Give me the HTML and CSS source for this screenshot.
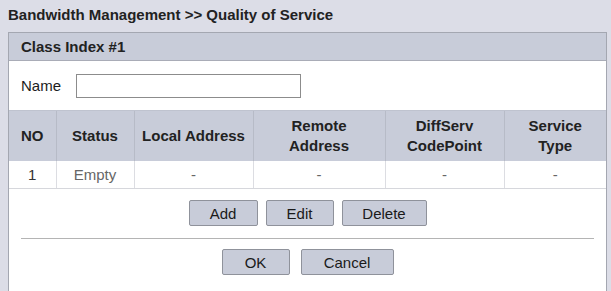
FILE: index.html
```html
<!DOCTYPE html>
<html lang="en">
<head>
    <meta charset="UTF-8">
    <title>Quality of Service</title>
    <link rel="stylesheet" href="styles.css">
</head>
<body>

<h1 class="page-title">Bandwidth Management &gt;&gt; Quality of Service</h1>

<div class="panel">
    <div class="panel-head">Class Index #1</div>

    <div class="name-row">
        <label for="className">Name</label>
        <input type="text" id="className" class="text-input">
    </div>

    <table class="class-table">
        <colgroup>
            <col class="c-no">
            <col class="c-status">
            <col class="c-local">
            <col class="c-remote">
            <col class="c-diff">
            <col class="c-type">
        </colgroup>
        <thead>
            <tr>
                <th>NO</th>
                <th>Status</th>
                <th>Local Address</th>
                <th>Remote<br>Address</th>
                <th>DiffServ<br>CodePoint</th>
                <th>Service<br>Type</th>
            </tr>
        </thead>
        <tbody>
            <tr>
                <td class="num">1</td>
                <td class="muted">Empty</td>
                <td class="muted">-</td>
                <td class="muted">-</td>
                <td class="muted">-</td>
                <td class="muted">-</td>
            </tr>
        </tbody>
    </table>

    <div class="button-row">
        <button class="btn btn-add">Add</button>
        <button class="btn btn-edit">Edit</button>
        <button class="btn btn-delete">Delete</button>
    </div>

    <div class="separator"></div>

    <div class="button-row bottom">
        <button class="btn btn-ok">OK</button>
        <button class="btn btn-cancel">Cancel</button>
    </div>
</div>

</body>
</html>
```

FILE: styles.css
```css
body {
    margin: 0;
    padding: 0 4px 0 8px;
    background: #dcdde7;
    font-family: "Liberation Sans", Arial, sans-serif;
    font-size: 15px;
    color: #1c1c1c;
    overflow: hidden;
}

.page-title {
    margin: 0;
    height: 32px;
    line-height: 29px;
    font-size: 15px;
    font-weight: bold;
    color: #222;
}

.panel {
    box-sizing: border-box;
    height: 259px;
    background: #ffffff;
    border: 1px solid #a4a7b1;
    border-bottom: none;
}

.panel-head {
    height: 27px;
    line-height: 28px;
    padding-left: 12px;
    background: #c8ccd9;
    border-bottom: 1px solid #a9acb7;
    font-weight: bold;
    color: #222;
}

.name-row {
    display: flex;
    align-items: center;
    gap: 15px;
    height: 49px;
    padding-left: 12px;
}

.text-input {
    box-sizing: border-box;
    width: 225px;
    height: 24px;
    margin: 0;
    border: 1px solid #8c8c8c;
    background: #fff;
}

.class-table {
    width: 100%;
    border-collapse: collapse;
    table-layout: fixed;
}

.c-no { width: 47px; }
.c-status { width: 78px; }
.c-local { width: 119px; }
.c-remote { width: 132px; }
.c-diff { width: 119px; }
.c-type { width: 102px; }

.class-table th {
    height: 50px;
    padding: 0;
    background: #c8ccd9;
    border-top: 1px solid #bfc3cf;
    border-left: 1px solid #b7bbc7;
    font-weight: bold;
    line-height: 20px;
    color: #222;
}

.class-table td {
    height: 27px;
    padding: 0;
    text-align: center;
    border-left: 1px solid #dcdde2;
    border-bottom: 1px solid #d6d7dc;
}

.class-table th:first-child,
.class-table td:first-child {
    border-left: none;
}

.class-table .num {
    color: #333;
}

.class-table .muted {
    color: #666;
}

.button-row {
    display: flex;
    justify-content: center;
    gap: 8px;
    padding: 11px 0 12px;
}

.button-row.bottom {
    gap: 11px;
    padding: 10px 0 0;
}

.btn {
    box-sizing: border-box;
    height: 26px;
    margin: 0;
    padding: 0;
    background: #c8ccd9;
    border: 1px solid #8f929b;
    border-radius: 2px;
    font-family: "Liberation Sans", Arial, sans-serif;
    font-size: 15px;
    color: #1a1a1a;
}

.btn-add { width: 69px; }
.btn-edit { width: 68px; }
.btn-delete { width: 85px; }
.btn-ok { width: 68px; }
.btn-cancel { width: 93px; }

.separator {
    height: 1px;
    margin: 0 12px;
    background: #b4b4b4;
}
```
